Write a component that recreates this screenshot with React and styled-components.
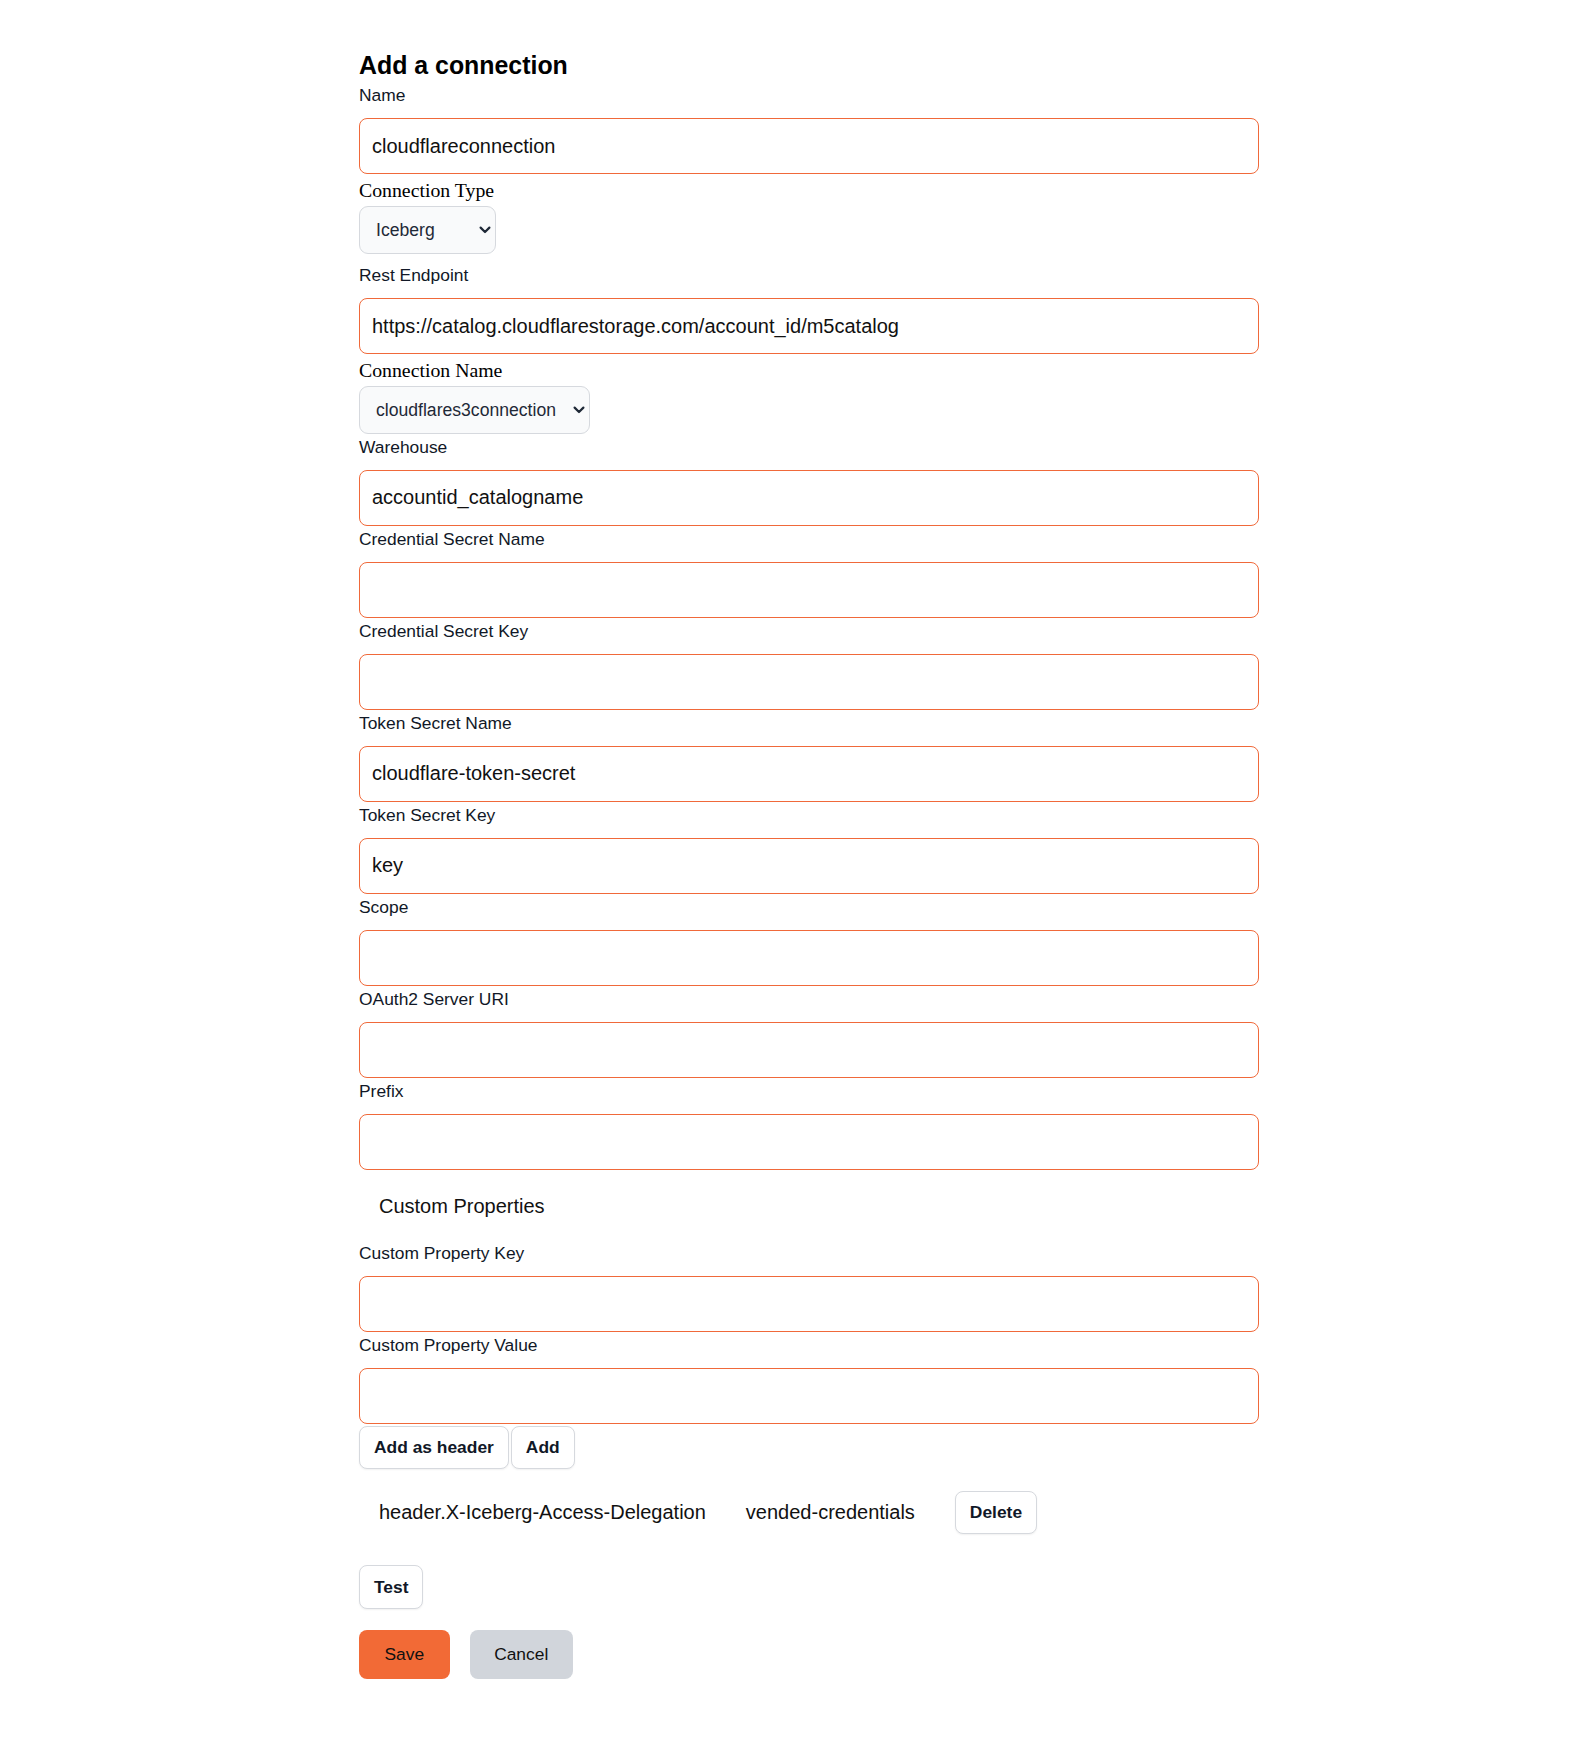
import React from 'react';
import styled, { createGlobalStyle } from 'styled-components';

const GlobalStyle = createGlobalStyle`
  body {
    margin: 0;
    background: #fff;
    font-family: "Liberation Sans", Arial, sans-serif;
    color: #111827;
  }
  * { box-sizing: border-box; }
`;

const ORANGE = '#f0693a';

const Page = styled.div`
  padding: 51px 0 62px 359px;
`;

const Form = styled.form`
  width: 900px;
  display: flex;
  flex-direction: column;
  align-items: flex-start;
`;

const Title = styled.h2`
  margin: 0 0 2.5px;
  font-size: 24.9px;
  line-height: 28.5px;
  font-weight: 700;
  color: #000;
`;

const Label = styled.label`
  display: block;
  margin: ${p => (p.$spaced ? '11.5px' : '3px')} 0 13px;
  font-size: 17.4px;
  line-height: 20px;
  color: #111827;
`;

const SerifLabel = styled.label`
  display: block;
  margin: 5px 0 3.5px;
  font-family: "Liberation Serif", "Times New Roman", serif;
  font-size: 19.8px;
  line-height: 23px;
  color: #000;
`;

const TextInput = styled.input`
  width: 100%;
  height: 56px;
  margin: 0;
  padding: 0 12px;
  border: 1px solid ${ORANGE};
  border-radius: 8px;
  background: #fff;
  font-family: "Liberation Sans", Arial, sans-serif;
  font-size: 20px;
  color: #111;
  outline: none;
`;

const SelectWrap = styled.div`
  position: relative;
  width: ${p => p.$width}px;
`;

const Select = styled.select`
  appearance: none;
  -webkit-appearance: none;
  width: 100%;
  height: 48px;
  padding: 0 30px 0 16px;
  border: 1px solid #d6d9de;
  border-radius: 9px;
  background: #f9fafb;
  font-family: "Liberation Sans", Arial, sans-serif;
  font-size: 17.6px;
  color: #1f2937;
  outline: none;
`;

const Chevron = styled.svg`
  position: absolute;
  right: 5px;
  top: 50%;
  transform: translateY(-50%);
  pointer-events: none;
`;

const SectionTitle = styled.div`
  margin: 25px 0 22.9px;
  padding-left: 20px;
  font-size: 20px;
  line-height: 23px;
  color: #111;
`;

const ButtonGroup = styled.div`
  display: flex;
  gap: 2px;
  margin-top: 1.7px;
`;

const OutlineButton = styled.button`
  height: ${p => (p.$tall ? 43.5 : 43)}px;
  padding: 0 14px;
  border: 1px solid #d6d9de;
  border-radius: 8px;
  background: #fff;
  box-shadow: 0 1px 2px rgba(0, 0, 0, 0.06);
  font-family: "Liberation Sans", Arial, sans-serif;
  font-size: 17.4px;
  font-weight: 700;
  color: #111827;
  cursor: pointer;
`;

const PropertyRow = styled.div`
  display: flex;
  align-items: center;
  margin-top: 21.7px;
`;

const Cell = styled.div`
  padding: 0 20px;
  font-size: 20px;
  color: #111;
`;

const TestRow = styled.div`
  margin-top: 31.7px;
`;

const ActionRow = styled.div`
  display: flex;
  gap: 20px;
  margin-top: 20.7px;
`;

const ActionButton = styled.button`
  height: 49.5px;
  padding: 0 ${p => (p.$primary ? 25.5 : 24.5)}px;
  border: none;
  border-radius: 8px;
  background: ${p => (p.$primary ? '#f26a36' : '#d1d5db')};
  font-family: "Liberation Sans", Arial, sans-serif;
  font-size: 17.4px;
  color: #111;
  cursor: pointer;
`;

function Field({ label, value, spaced }) {
  return (
    <>
      <Label $spaced={spaced}>{label}</Label>
      <TextInput defaultValue={value} />
    </>
  );
}

function Dropdown({ label, width, value }) {
  return (
    <>
      <SerifLabel>{label}</SerifLabel>
      <SelectWrap $width={width}>
        <Select defaultValue={value}>
          <option>{value}</option>
        </Select>
        <Chevron width="12" height="8" viewBox="0 0 12 8">
          <path d="M1.6 1.6 L6 6 L10.4 1.6" fill="none" stroke="#1f2937" strokeWidth="2.2" strokeLinecap="round" strokeLinejoin="round" />
        </Chevron>
      </SelectWrap>
    </>
  );
}

export default function App() {
  return (
    <Page>
      <GlobalStyle />
      <Form onSubmit={e => e.preventDefault()}>
        <Title>Add a connection</Title>
        <Field label="Name" value="cloudflareconnection" />
        <Dropdown label="Connection Type" width={137} value="Iceberg" />
        <Field spaced label="Rest Endpoint" value="https://catalog.cloudflarestorage.com/account_id/m5catalog" />
        <Dropdown label="Connection Name" width={231} value="cloudflares3connection" />
        <Field label="Warehouse" value="accountid_catalogname" />
        <Field label="Credential Secret Name" value="" />
        <Field label="Credential Secret Key" value="" />
        <Field label="Token Secret Name" value="cloudflare-token-secret" />
        <Field label="Token Secret Key" value="key" />
        <Field label="Scope" value="" />
        <Field label="OAuth2 Server URI" value="" />
        <Field label="Prefix" value="" />

        <SectionTitle>Custom Properties</SectionTitle>
        <Field label="Custom Property Key" value="" />
        <Field label="Custom Property Value" value="" />
        <ButtonGroup>
          <OutlineButton type="button">Add as header</OutlineButton>
          <OutlineButton type="button">Add</OutlineButton>
        </ButtonGroup>

        <PropertyRow>
          <Cell>header.X-Iceberg-Access-Delegation</Cell>
          <Cell>vended-credentials</Cell>
          <Cell>
            <OutlineButton type="button">Delete</OutlineButton>
          </Cell>
        </PropertyRow>

        <TestRow>
          <OutlineButton type="button" $tall>Test</OutlineButton>
        </TestRow>

        <ActionRow>
          <ActionButton type="submit" $primary>Save</ActionButton>
          <ActionButton type="button">Cancel</ActionButton>
        </ActionRow>
      </Form>
    </Page>
  );
}
